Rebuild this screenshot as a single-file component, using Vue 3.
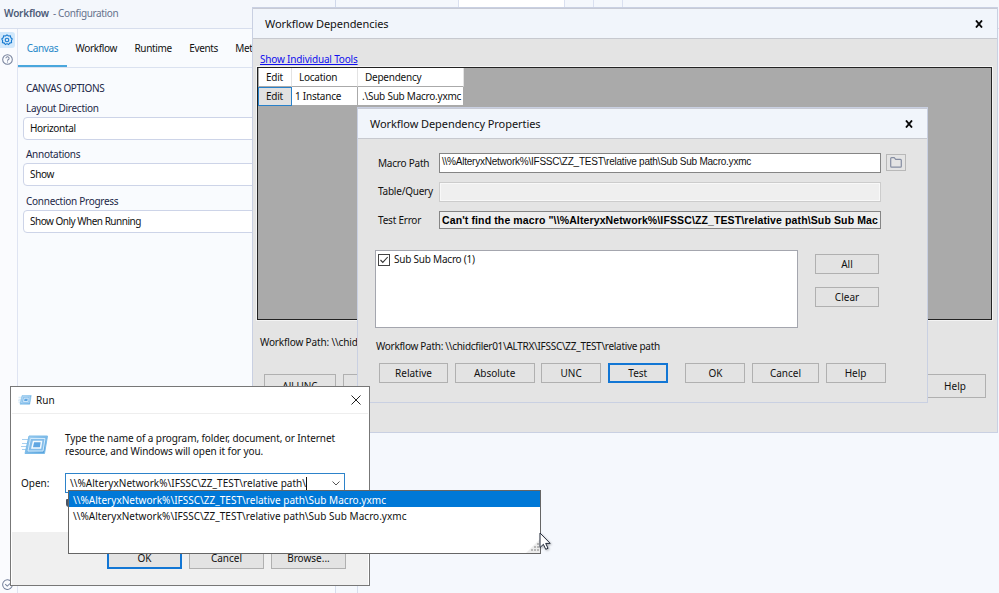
<template>
  <div class="desktop">
    <div class="app-header">
      <div class="pane-title"><b>Workflow</b><span>- Configuration</span></div>
      <div class="doc-tabs"><i></i><i class="open"></i><i></i><i></i></div>
    </div>
    <div class="app-body">
      <aside class="rail">
        <div class="rail-icon active">
          <svg width="12" height="12" viewBox="0 0 24 24" fill="none" stroke="currentColor" stroke-width="2.2">
            <path d="M12 1.8l3 2.3 3.8-.3.8 3.7 2.8 2.5-1.6 3.4.3 3.8-3.7 1-2.3 3-3.1-2-3.1 2-2.3-3-3.7-1 .3-3.8L1.600 10l2.800-2.500.8-3.700 3.800.3Z" />
            <circle cx="12" cy="12" r="3.600" />
          </svg>
        </div>
        <div class="rail-icon">
          <svg width="11" height="11" viewBox="0 0 24 24" fill="none" stroke="currentColor" stroke-width="2.2">
            <circle cx="12" cy="12" r="10.500" />
            <path d="M8.500 9.500a3.500 3.500 0 1 1 5 3.200c-1 .5-1.500 1-1.500 2.100M12 16.600v2" />
          </svg>
        </div>
        <div class="rail-icon bottom">
          <svg width="11" height="11" viewBox="0 0 24 24" fill="none" stroke="currentColor" stroke-width="2.2">
            <path d="M20 5.500A10.500 10.500 0 1 0 22.500 12M7 11l4.500 4.500L22 6" />
          </svg>
        </div>
      </aside>
      <main class="config">
        <nav class="tabs">
          <span v-for="tab in tabs" :key="tab" class="tab" :class="{ current: tab === 'Canvas' }">{{ tab }}</span>
        </nav>
        <section class="options">
          <h2>CANVAS OPTIONS</h2>
          <div v-for="field in fields" :key="field.label" class="field">
            <label>{{ field.label }}</label>
            <div class="select">{{ field.value }}</div>
          </div>
        </section>
      </main>
      <div class="canvas">
        <i></i>
      </div>
    </div>

    <section class="dialog dependencies">
      <header class="dialog-title">
        <span>Workflow Dependencies</span>
        <svg class="close" width="8" height="8" viewBox="0 0 8 8"><path d="M1 .5l6 7M7 .5l-6 7" /></svg>
      </header>
      <div class="dependencies-body">
        <a class="link">Show Individual Tools</a>
        <div class="grid">
          <div class="row head"><span>Edit</span><span>Location</span><span>Dependency</span></div>
          <div class="row"><span class="edit">Edit</span><span>1 Instance</span><span>.\Sub Sub Macro.yxmc</span></div>
        </div>
        <div class="path">Workflow Path: \\chidcfiler01</div>
        <div class="dependencies-buttons">
          <button>All UNC</button>
          <button class="blank"></button>
          <button class="help">Help</button>
        </div>
      </div>
    </section>

    <section class="dialog properties">
      <header class="dialog-title">
        <span>Workflow Dependency Properties</span>
        <svg class="close" width="8" height="8" viewBox="0 0 8 8"><path d="M1 .5l6 7M7 .5l-6 7" /></svg>
      </header>
      <div class="properties-body">
        <div class="prop">
          <label>Macro Path</label>
          <div class="input">\\%AlteryxNetwork%\IFSSC\ZZ_TEST\relative path\Sub Sub Macro.yxmc</div>
          <span class="folder">
            <svg width="12" height="11" viewBox="0 0 12 11" fill="none" stroke="#858da2" stroke-width="1.200">
              <path d="M.7 9.300V1.600Q.7.7 1.600.7h2.600l1.500 1.600h4.700q.9 0 .9.900v6.100q0 .9-.9.900H1.600q-.9 0-.9-.9Z" />
            </svg>
          </span>
        </div>
        <div class="prop">
          <label>Table/Query</label>
          <div class="input disabled"></div>
        </div>
        <div class="prop">
          <label>Test Error</label>
          <div class="input error">Can't find the macro "\\%AlteryxNetwork%\IFSSC\ZZ_TEST\relative path\Sub Sub Mac</div>
        </div>
        <div class="tools">
          <div class="tool-list">
            <span class="check">
              <svg width="10" height="10" viewBox="0 0 10 10" fill="none" stroke="#333" stroke-width="1.100"><path d="M1.500 5l2.300 2.400L8.700 2" /></svg>
            </span>
            <span>Sub Sub Macro (1)</span>
          </div>
          <div class="tool-actions">
            <button>All</button>
            <button>Clear</button>
          </div>
        </div>
        <div class="path">Workflow Path: \\chidcfiler01\ALTRX\IFSSC\ZZ_TEST\relative path</div>
        <div class="buttons">
          <button class="relative">Relative</button>
          <button class="absolute">Absolute</button>
          <button>UNC</button>
          <button class="focus">Test</button>
          <button class="ok">OK</button>
          <button class="cancel">Cancel</button>
          <button>Help</button>
        </div>
      </div>
    </section>

    <section class="run">
      <header class="run-title">
        <svg width="14" height="10" viewBox="0 0 28 20"><use href="#run-icon" /></svg>
        <span>Run</span>
        <svg class="run-close" width="10" height="10" viewBox="0 0 10 10"><path d="M.5.5l9 9M9.500.5l-9 9" fill="none" stroke="#222" /></svg>
      </header>
      <div class="run-body">
        <div class="run-intro">
          <svg width="28" height="20" viewBox="0 0 28 20">
            <defs>
              <linearGradient id="run-blue" x1="0" y1="0" x2="1" y2="1">
                <stop offset="0" stop-color="#a9d4f3" />
                <stop offset="1" stop-color="#4f9edb" />
              </linearGradient>
            </defs>
            <g id="run-icon">
              <path d="M1 4.500h8M1 8.500h7M0 11.500h7M1 14.500h5" stroke="#a9d0ef" stroke-width="1" />
              <path d="M8 1h18.500l-3 17.500H4Z" fill="url(#run-blue)" stroke="#7dbce9" />
              <path d="M9.500 3.500h14.500l-2 12.500H7Z" fill="#84bdea" stroke="#d3ebfc" stroke-width="1" />
              <path d="M12.500 6.500h8l-1 6.500h-8.500Z" fill="#5fa6e2" stroke="#f2faff" stroke-width="1.500" />
            </g>
          </svg>
          <p>Type the name of a program, folder, document, or Internet<br />resource, and Windows will open it for you.</p>
        </div>
        <div class="run-open">
          <label>Open:</label>
          <div class="combo">
            <span>\\%AlteryxNetwork%\IFSSC\ZZ_TEST\relative path\</span><i class="caret"></i>
            <svg width="8" height="5" viewBox="0 0 8 5" fill="none" stroke="#555"><path d="M.5.5L4 4 7.500.5" /></svg>
          </div>
        </div>
        <i class="shield"></i>
      </div>
      <footer class="run-footer">
        <button class="focus">OK</button>
        <button>Cancel</button>
        <button>Browse...</button>
      </footer>
    </section>

    <div class="suggestions">
      <div class="suggestion selected">\\%AlteryxNetwork%\IFSSC\ZZ_TEST\relative path\Sub Macro.yxmc</div>
      <div class="suggestion">\\%AlteryxNetwork%\IFSSC\ZZ_TEST\relative path\Sub Sub Macro.yxmc</div>
      <svg class="grip" width="14" height="14" viewBox="0 0 14 14">
        <path d="M14 0v14H0Z" fill="#ededed" />
        <path d="M11 4h2v2h-2zM8 7h2v2H8zM11 7h2v2h-2zM5 10h2v2H5zM8 10h2v2H8zM11 10h2v2h-2z" fill="#b8b8b8" />
      </svg>
    </div>
    <svg class="cursor" width="13" height="19" viewBox="0 0 13 19">
      <path d="M1 1v14.500l3.400-3.200 2.300 5 2.300-1-2.300-4.900h4.500Z" fill="#fff" stroke="#222a3a" />
    </svg>
  </div>
</template>

<script setup>
const tabs = ["Canvas", "Workflow", "Runtime", "Events", "Meta Info"];

const fields = [
  { label: "Layout Direction", value: "Horizontal" },
  { label: "Annotations", value: "Show" },
  { label: "Connection Progress", value: "Show Only When Running" },
];
</script>

<style>
body {
  margin: 0;
  overflow: hidden;
}
</style>

<style scoped>
* {
  box-sizing: border-box;
}

.desktop {
  position: relative;
  width: 999px;
  height: 593px;
  overflow: hidden;
  display: flex;
  flex-direction: column;
  background: #f5f8fd;
  color: #111;
  font-family: "Noto Sans", "Open Sans", sans-serif;
  font-size: 10px;
  line-height: 14px;
  white-space: nowrap;
}

button {
  font: inherit;
  color: #111;
  width: 60px;
  height: 20px;
  padding: 0;
  border: 1px solid #b0b0b0;
  background: #e3e3e3;
  line-height: 16px;
}

button.focus {
  border: 2px solid #1276d4;
}

/* configuration pane */
.app-header {
  height: 29px;
  flex: none;
  display: flex;
  border-bottom: 1px solid #d7deed;
  background: #f4f7fc;
  color: #66728c;
}

.pane-title {
  width: 336px;
  display: flex;
  gap: 4px;
  padding: 6px 0 0 4px;
  border-right: 1px solid #d0d8ea;
  letter-spacing: -0.2px;
}

.pane-title span {
  letter-spacing: -0.35px;
}

.pane-title b {
  color: #4d5c78;
  font-weight: 600;
}

.doc-tabs {
  display: flex;
}

.doc-tabs i {
  width: 29px;
  border-right: 1px solid #dae0f0;
}

.doc-tabs i:first-child {
  width: 123px;
}

.doc-tabs i.open {
  width: 106px;
  background: #fff;
}

.app-body {
  flex: 1;
  display: flex;
}

.rail {
  width: 18px;
  padding-top: 3px;
  display: flex;
  flex-direction: column;
  gap: 2px;
  border-right: 1px solid #dfe4f2;
  background: #fafbfe;
}

.rail-icon {
  width: 15px;
  height: 16px;
  padding-right: 1px;
  display: grid;
  place-items: center;
  border-radius: 0 3px 3px 0;
  color: #75809b;
}

.rail-icon:nth-child(2) {
  margin-top: 1px;
}

.rail-icon.active {
  background: #d2e8fb;
  color: #187bd0;
}

.rail-icon.bottom {
  margin-top: auto;
  margin-bottom: 1px;
}

.config {
  width: 317px;
  background: #f9fbfe;
}

.tabs {
  height: 39px;
  display: flex;
  border-bottom: 1px solid #dbe2f0;
  letter-spacing: -0.35px;
}

.tab {
  padding: 12px 8.700px 0;
}

.tab.current {
  color: #2788c9;
  border-bottom: 2px solid #4aa7dd;
}

.options {
  padding: 13px 0 0 5px;
  letter-spacing: -0.27px;
}

.options h2 {
  margin: 0 0 6px 3px;
  font-size: 10px;
  font-weight: 400;
  color: #1c2747;
  letter-spacing: -0.42px;
}

.field {
  height: 46.400px;
}

.field label {
  display: block;
  margin: 0 0 2px 3px;
  color: #1c2747;
}

.select {
  height: 23px;
  padding: 3px 6px;
  border: 1px solid #cdd4e8;
  border-radius: 4px;
  background: #fff;
  letter-spacing: -0.5px;
}

.field:first-of-type .select,
.field:nth-of-type(2) .select {
  letter-spacing: -0.3px;
}

.canvas {
  flex: 1;
  border-left: 1px solid #d7deed;
}

.canvas i {
  display: block;
  width: 22px;
  height: 100%;
  border-right: 1px solid #d7deed;
}

/* tool dialogs */
.dialog {
  position: absolute;
  border: 1px solid #c9d0e2;
  background: #e4e4e4;
  overflow: hidden;
}

.dependencies {
  left: 252px;
  top: 7px;
  width: 746px;
  height: 426px;
}

.properties {
  left: 357px;
  top: 107px;
  width: 571px;
  height: 296px;
}

.dialog-title {
  height: 31px;
  padding: 1px 14px 0 12px;
  display: flex;
  align-items: center;
  justify-content: space-between;
  border-top: 1px solid #c7cad5;
  border-bottom: 1px solid #c7c9cf;
  background: #f1f5fb;
  font-size: 11px;
  letter-spacing: -0.07px;
}

.close {
  fill: none;
  stroke: #080808;
  stroke-width: 1.900;
}

.dependencies-body {
  padding: 13px 5px 0 4px;
}

.link {
  display: block;
  padding-left: 3px;
  color: #1010ee;
  text-decoration: underline;
  letter-spacing: -0.18px;
}

.grid {
  height: 253px;
  margin-top: 1px;
  padding-left: 1px;
  border: 1px solid #222;
  outline: 1px solid #f4f4f4;
  background: #aaa;
  letter-spacing: -0.24px;
}

.row {
  display: grid;
  grid-template-columns: 33px 66px 106px;
  width: 205px;
  height: 19px;
  background: #fff;
}

.row span {
  padding: 2px 3px;
  border-right: 1px solid #aaa;
  border-bottom: 1px solid #aaa;
}

.row span:last-child {
  padding-left: 4px;
}

.row.head span {
  padding-left: 7px;
  border-right-color: #e3e3e3;
}

.row span.edit {
  margin-left: -1px;
  padding: 1px 7px;
  border: 1px solid #2881ca;
  background: #e1e1e1;
}

.dependencies-body .path {
  margin: 15px 0 0 3px;
  letter-spacing: -0.15px;
}

.dependencies-buttons {
  display: flex;
  gap: 7px;
  margin: 25px 6px 0 7px;
}

.dependencies-buttons button {
  width: 72px;
  height: 24px;
  line-height: 22px;
}

.dependencies-buttons .help {
  width: 62px;
  margin-left: auto;
}

.properties-body {
  padding: 14px 20px 0 17px;
}

.prop {
  display: flex;
  align-items: center;
  height: 20px;
  margin: 0 0 8.500px 3px;
}

.prop label {
  width: 61px;
  margin-top: -1px;
  letter-spacing: -0.22px;
}

.input {
  width: 442px;
  height: 20px;
  padding: 1px 2px;
  overflow: hidden;
  border: 1px solid #858585;
  background: #fff;
  font-family: "Liberation Sans", Arial, sans-serif;
  letter-spacing: -0.23px;
}

.input.disabled {
  border-color: #ccc;
  background: #efefef;
  box-shadow: inset 0 0 0 1px #f8f8f8;
}

.input.error {
  height: 18px;
  background: #eee;
  font-size: 10.500px;
  font-weight: 700;
  color: #000;
  letter-spacing: 0.12px;
}

.folder {
  display: grid;
  place-items: center;
  width: 20px;
  height: 17px;
  margin: -2px 0 0 5px;
  border: 1px solid #b8b8b8;
}

.tools {
  display: flex;
  gap: 17px;
  margin-top: 20px;
}

.tool-list {
  display: flex;
  gap: 4px;
  width: 423px;
  height: 78px;
  padding: 1px 2px;
  border: 1px solid #a4a6ae;
  background: #fff;
  letter-spacing: -0.22px;
}

.check {
  width: 12px;
  height: 12px;
  margin-top: 2px;
  border: 1px solid #444;
  line-height: 0;
}

.tool-actions {
  display: flex;
  flex-direction: column;
  gap: 13px;
  padding-top: 4px;
  letter-spacing: -0.1px;
}

.tool-actions button {
  width: 64px;
}

.properties-body .path {
  margin: 11px 0 0 1px;
  letter-spacing: -0.29px;
}

.buttons {
  display: flex;
  gap: 6.600px;
  margin: 10px 0 0 4px;
  letter-spacing: -0.1px;
}

.buttons button {
  line-height: 15px;
}

.buttons .relative {
  width: 69px;
}

.buttons .absolute {
  width: 80px;
}

.buttons .ok {
  margin-left: 11px;
}

.buttons .cancel {
  width: 67px;
}

/* run window */
.run {
  position: absolute;
  left: 10px;
  top: 386px;
  width: 360px;
  height: 200px;
  display: flex;
  flex-direction: column;
  border: 1px solid #777;
  background: #fff;
}

.run-title {
  height: 27px;
  margin: 0 1px;
  padding: 0 7px 1px 6px;
  display: flex;
  align-items: center;
  gap: 4px;
  border-bottom: 1px solid #eee;
}

.run-close {
  margin-left: auto;
}

.run-body {
  flex: 1;
  padding: 18px 0 0 10px;
}

.run-intro {
  display: flex;
  gap: 16px;
}

.run-intro svg {
  margin-top: 3px;
}

.run-intro p {
  margin: 0;
  line-height: 13px;
  letter-spacing: -0.09px;
}

.run-open {
  display: flex;
  align-items: center;
  margin-top: 15px;
}

.run-open label {
  width: 44px;
}

.combo {
  width: 280px;
  height: 20px;
  padding: 0 4px;
  display: flex;
  align-items: center;
  border: 1px solid #2d83ca;
  letter-spacing: 0.03px;
}

.combo svg {
  margin-left: auto;
}

.caret {
  width: 1px;
  height: 13px;
  background: #111;
}

.shield {
  display: block;
  width: 6px;
  height: 8px;
  margin: 6px 0 0 45px;
  border-radius: 1px 1px 3px 3px;
  background: #4c5564;
}

.run-footer {
  height: 53px;
  margin: 0 1px;
  padding: 15px 22px 0 0;
  display: flex;
  justify-content: flex-end;
  gap: 7px;
  background: #f0f0f0;
}

.run-footer button {
  width: 75px;
  height: 22px;
  line-height: 18px;
}

.suggestions {
  position: absolute;
  left: 68px;
  top: 490px;
  width: 473px;
  height: 64px;
  border: 1px solid #666;
  background: #fff;
}

.suggestion {
  height: 16px;
  padding-left: 4px;
  line-height: 18px;
  letter-spacing: 0.02px;
}

.suggestion.selected {
  background: #0078d7;
  color: #fff;
}

.grip {
  position: absolute;
  right: 0;
  bottom: 0;
}

.cursor {
  position: absolute;
  left: 539px;
  top: 532px;
  filter: drop-shadow(1px 1px 1px rgba(0, 0, 0, 0.3));
}
</style>
